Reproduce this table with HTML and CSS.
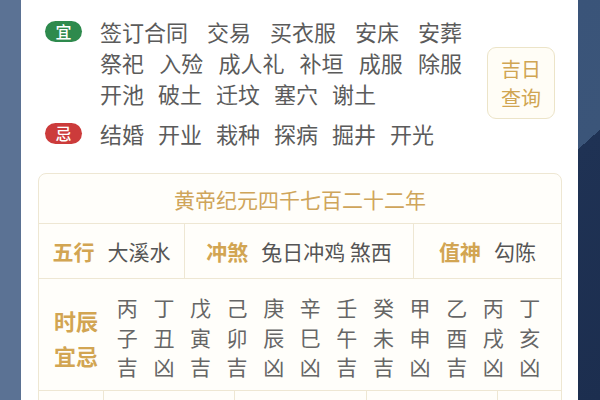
FILE: index.html
```html
<!DOCTYPE html>
<html lang="zh">
<head>
<meta charset="utf-8">
<link rel="stylesheet" href="styles.css">
</head>
<body>
<div class="page">
  <div class="side-left"></div>
  <div class="card">
    <div class="top">
      <div class="yiji">
        <div class="yj-row">
          <span class="badge badge-yi">宜</span>
          <div class="items">
            <div class="line full"><span>签订合同</span><span>交易</span><span>买衣服</span><span>安床</span><span>安葬</span></div>
            <div class="line full"><span>祭祀</span><span>入殓</span><span>成人礼</span><span>补垣</span><span>成服</span><span>除服</span></div>
            <div class="line"><span>开池</span><span>破土</span><span>迁坟</span><span>塞穴</span><span>谢土</span></div>
          </div>
        </div>
        <div class="yj-row ji">
          <span class="badge badge-ji">忌</span>
          <div class="items">
            <div class="line"><span>结婚</span><span>开业</span><span>栽种</span><span>探病</span><span>掘井</span><span>开光</span></div>
          </div>
        </div>
      </div>
      <div class="query"><span class="q-line">吉日</span><span class="q-line">查询</span></div>
    </div>

    <div class="table">
      <div class="t-head">黄帝纪元四千七百二十二年</div>
      <div class="t-info">
        <div class="cell"><span class="lbl">五行</span><span class="val">大溪水</span></div>
        <div class="cell"><span class="lbl">冲煞</span><span class="val">兔日冲鸡 煞西</span></div>
        <div class="cell"><span class="lbl">值神</span><span class="val">勾陈</span></div>
      </div>
      <div class="t-hours">
        <div class="h-label"><span class="hl-line">时辰</span><span class="hl-line">宜忌</span></div>
        <div class="h-grid">
          <span>丙</span><span>丁</span><span>戊</span><span>己</span><span>庚</span><span>辛</span><span>壬</span><span>癸</span><span>甲</span><span>乙</span><span>丙</span><span>丁</span>
          <span>子</span><span>丑</span><span>寅</span><span>卯</span><span>辰</span><span>巳</span><span>午</span><span>未</span><span>申</span><span>酉</span><span>戌</span><span>亥</span>
          <span>吉</span><span>凶</span><span>吉</span><span>吉</span><span>凶</span><span>凶</span><span>吉</span><span>吉</span><span>凶</span><span>吉</span><span>凶</span><span>凶</span>
        </div>
      </div>
      <div class="t-foot">
        <div class="fcell"></div><div class="fcell"></div><div class="fcell"></div><div class="fcell"></div><div class="fcell"></div>
      </div>
    </div>
  </div>
  <div class="side-right"></div>
</div>
</body>
</html>
```

FILE: styles.css
```css
html, body {
  margin: 0;
  padding: 0;
  width: 600px;
  height: 400px;
  overflow: hidden;
  background: #ffffff;
  font-family: "Noto Sans CJK SC", "Noto Sans", sans-serif;
}

.page {
  display: flex;
  width: 600px;
  height: 400px;
  overflow: hidden;
}

.side-left {
  width: 21px;
  flex: none;
  background: #5b7294;
}

.side-right {
  width: 22px;
  flex: none;
  background: linear-gradient(138deg, #3a5479 0, #3b5579 111px, #1f3254 111px, #1c2e4f 100%);
}

.card {
  flex: 1;
  background: #ffffff;
  padding: 16px 16px 0 17px;
  box-sizing: border-box;
  overflow: hidden;
}

.top {
  display: flex;
  align-items: center;
  justify-content: space-between;
  padding: 0 7px;
}

.yj-row {
  display: flex;
  align-items: flex-start;
  gap: 18px;
}

.yj-row.ji {
  margin-top: 9px;
}

.badge {
  width: 37px;
  height: 21px;
  margin-top: 5px;
  border-radius: 11px;
  color: #ffffff;
  font-size: 16px;
  font-weight: 500;
  line-height: 21px;
  text-align: center;
  flex: none;
}

.badge-yi { background: #2e8a4d; }
.badge-ji { background: #cc3b3b; }

.items {
  width: 362px;
  color: #5b5b5b;
  font-size: 22px;
  line-height: 31px;
}

.line {
  display: flex;
  gap: 14px;
}

.line.full {
  justify-content: space-between;
  gap: 0;
}

.query {
  width: 68px;
  height: 72px;
  box-sizing: border-box;
  border: 1.5px solid #ece4c8;
  border-radius: 9px;
  background: #fffdf6;
  color: #d0a552;
  font-size: 20px;
  display: flex;
  flex-direction: column;
  align-items: center;
  justify-content: center;
}

.q-line {
  display: block;
  line-height: 29px;
}

.table {
  margin-top: 24px;
  border: 1px solid #eee7d3;
  border-radius: 8px 8px 0 0;
  background: #fffefa;
}

.t-head {
  height: 49px;
  display: flex;
  align-items: center;
  justify-content: center;
  color: #cfa55a;
  font-size: 21px;
  border-bottom: 1px solid #eee7d3;
}

.t-info {
  display: grid;
  grid-template-columns: 146px 229px 1fr;
  height: 54px;
  border-bottom: 1px solid #eee7d3;
}

.t-info .cell {
  display: flex;
  align-items: center;
  justify-content: center;
  gap: 13px;
  font-size: 21px;
  border-right: 1px solid #eee7d3;
}

.t-info .cell:last-child {
  border-right: none;
}

.lbl {
  color: #d2a552;
  font-weight: 700;
}

.val {
  color: #555555;
}

.t-hours {
  display: flex;
  align-items: center;
  height: 112px;
  border-bottom: 1px solid #eee7d3;
  padding-top: 6px;
  box-sizing: border-box;
}

.h-label {
  width: 70px;
  flex: none;
  padding-left: 15px;
  box-sizing: border-box;
  color: #d2a552;
  font-weight: 700;
  font-size: 22px;
  display: flex;
  flex-direction: column;
}

.hl-line {
  display: block;
  line-height: 35px;
}

.h-grid {
  display: grid;
  grid-template-columns: repeat(12, 36.6px);
  grid-auto-rows: 29.5px;
  align-items: center;
  justify-items: center;
  color: #666666;
  font-size: 21px;
  line-height: 29.5px;
}

.t-foot {
  display: grid;
  grid-template-columns: 65px 131px 132px 131px 1fr;
  height: 50px;
}

.fcell {
  border-right: 1px solid #eee7d3;
}

.fcell:last-child {
  border-right: none;
}
```
